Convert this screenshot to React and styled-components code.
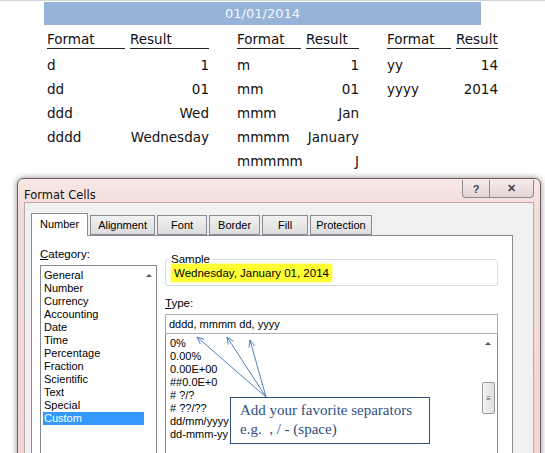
import React from 'react';
import styled, { createGlobalStyle } from 'styled-components';

const Global = createGlobalStyle`
  html, body { margin: 0; padding: 0; background: #fff; }
  body { width: 545px; height: 453px; overflow: hidden; font-family: "DejaVu Sans", sans-serif; }
`;

const Page = styled.div`
  position: relative;
  width: 545px;
  height: 453px;
  overflow: hidden;
`;

const GridTop = styled.div`
  height: 1px;
  background: #d4d4d4;
`;

const Sheet = styled.div`
  margin-left: 44px;
  width: 437px;
`;

const Banner = styled.div`
  height: 23px;
  margin-top: 1px;
  background: #95b3d7;
  color: #f4f7fb;
  font-size: 13px;
  text-align: center;
  line-height: 24px;
`;

const Columns = styled.div`
  display: grid;
  grid-template-columns: 78px 79px 18px 64px 53px 18px 64px 42px;
  column-gap: 5px;
  font-size: 13.5px;
  color: #111;
  margin-left: -10px;
  padding-left: 13px;
`;

const Head = styled.div`
  height: 18px;
  margin-top: 5px;
  border-bottom: 1px solid #222;
  line-height: 18px;
  text-align: left;
`;

const Cell = styled.div`
  height: 24px;
  line-height: 24px;
  text-align: ${p => (p.right ? 'right' : 'left')};
  white-space: nowrap;
  ${p => p.first && 'margin-top: 4px;'}
`;

const Dialog = styled.div`
  position: absolute;
  left: 17px;
  top: 178px;
  width: 522px;
  height: 290px;
  border: 1px solid #6a5f5c;
  border-radius: 6px 6px 0 0;
  background: linear-gradient(#f7e8e6, #f3dcd8 30px, #f1d6d2);
  box-shadow: 0 0 6px rgba(0,0,0,0.45);
  font-family: "Liberation Sans", Tahoma, sans-serif;
  font-size: 11px;
  color: #000;
  display: flex;
  flex-direction: column;
`;

const TitleBar = styled.div`
  display: flex;
  align-items: flex-start;
  height: 28px;
  padding-left: 6px;
`;

const Title = styled.div`
  flex: 1;
  font-family: "DejaVu Sans", sans-serif;
  font-size: 11.5px;
  padding-top: 9px;
  color: #111;
`;

const Caps = styled.div`
  display: flex;
  margin-right: 6px;
  margin-top: 1px;
  border: 1px solid #8c8a8a;
  border-top: none;
  border-radius: 0 0 4px 4px;
  background: linear-gradient(#f6eeee, #e3d3d3);
  height: 17px;
`;

const Cap = styled.div`
  width: ${p => p.w}px;
  display: flex;
  align-items: center;
  justify-content: center;
  color: #444;
  font-weight: bold;
  font-size: 11px;
  border-left: ${p => (p.sep ? '1px solid #8c8a8a' : 'none')};
`;

const Body = styled.div`
  flex: 1;
  margin: 0 6px;
  border: 1px solid #b7aaa8;
  border-bottom: none;
  background: #f0f0f0;
  padding: 10px 0 0 6px;
`;

const Tabs = styled.div`
  display: flex;
  align-items: flex-end;
  height: 22px;
  gap: 2px;
`;

const Tab = styled.div`
  height: ${p => (p.active ? 22 : 18)}px;
  padding: 0 ${p => p.pad}px;
  border: 1px solid #898c95;
  border-bottom: ${p => (p.active ? 'none' : '1px solid #898c95')};
  background: ${p => (p.active ? '#fff' : 'linear-gradient(#f2f2f2, #dcdcdc)')};
  line-height: ${p => (p.active ? 20 : 18)}px;
  font-size: 11px;
  position: relative;
  z-index: ${p => (p.active ? 2 : 1)};
  margin-bottom: ${p => (p.active ? -1 : 0)}px;
`;

const Panel = styled.div`
  width: 472px;
  height: 230px;
  background: #fff;
  border: 1px solid #898c95;
  display: flex;
  padding: 12px 0 0 8px;
  gap: 8px;
`;

const CatCol = styled.div`
  width: 117px;
`;

const Label = styled.div`
  height: 13px;
  margin-bottom: 4px;
  font-size: 11.5px;
  u { text-decoration: underline; }
`;

const ListBox = styled.div`
  position: relative;
  border: 1px solid #828790;
  height: 200px;
  padding: 3px 0 0 2px;
`;

const Item = styled.div`
  height: 13px;
  line-height: 13px;
  padding-left: 1px;
  width: ${p => (p.sel ? '100px' : 'auto')};
  background: ${p => (p.sel ? '#3399ff' : 'transparent')};
  color: ${p => (p.sel ? '#fff' : '#000')};
`;

const ScrollArrow = styled.div`
  position: absolute;
  right: ${p => p.r}px;
  top: ${p => p.t}px;
  width: 0;
  height: 0;
  border-left: 3px solid transparent;
  border-right: 3px solid transparent;
  border-bottom: 3px solid #5a5a5a;
`;

const RightCol = styled.div`
  width: 333px;
  display: flex;
  flex-direction: column;
  padding-top: 5px;
`;

const Group = styled.fieldset`
  margin: 0;
  padding: 2px 0 4px 5px;
  border: 1px solid #d5dfe5;
  border-radius: 3px;
  height: 27px;
  box-sizing: border-box;
  height: 33px;
  legend { padding: 0 2px; margin-left: -2px; font-size: 11.5px; }
`;

const Highlight = styled.span`
  background: #ffff33;
  padding: 3px 3px;
  font-size: 11.5px;
  box-shadow: 0 0 2px #ffff33;
`;

const TypeLabel = styled.div`
  margin-top: 11px;
  height: 13px;
  margin-bottom: 4px;
  font-size: 11.5px;
`;

const Input = styled.div`
  border: 1px solid #abadb3;
  height: 18px;
  line-height: 18px;
  padding-left: 3px;
`;

const TypeList = styled.div`
  position: relative;
  flex: 1;
  border: 1px solid #828790;
  border-top: none;
  padding: 3px 0 0 3px;
`;

const Thumb = styled.div`
  position: absolute;
  right: 2px;
  top: 48px;
  width: 11px;
  height: 30px;
  border: 1px solid #9a9a9a;
  border-radius: 2px;
  background: linear-gradient(90deg, #f3f3f3, #dedede);
  display: flex;
  align-items: center;
  justify-content: center;
  font-size: 8px;
  color: #555;
`;

const Callout = styled.div`
  position: absolute;
  left: 230px;
  top: 397px;
  width: 200px;
  height: 47px;
  border: 1px solid #2f4f7f;
  background: #fff;
  font-family: "Liberation Serif", serif;
  font-size: 15px;
  color: #2f4f7f;
  padding: 3px 0 0 9px;
  box-sizing: border-box;
  line-height: 19px;
  z-index: 5;
`;

const Arrows = styled.svg`
  position: absolute;
  left: 0;
  top: 0;
  z-index: 4;
  pointer-events: none;
`;

const rows = [
  ['d', '1', 'm', '1', 'yy', '14'],
  ['dd', '01', 'mm', '01', 'yyyy', '2014'],
  ['ddd', 'Wed', 'mmm', 'Jan', '', ''],
  ['dddd', 'Wednesday', 'mmmm', 'January', '', ''],
  ['', '', 'mmmmm', 'J', '', ''],
];

const cats = ['General', 'Number', 'Currency', 'Accounting', 'Date', 'Time', 'Percentage', 'Fraction', 'Scientific', 'Text', 'Special', 'Custom'];
const types = ['0%', '0.00%', '0.00E+00', '##0.0E+0', '# ?/?', '# ??/??', 'dd/mm/yyyy', 'dd-mmm-yy'];

// arrow tips, all starting from the callout corner
const tips = [[197, 337], [227, 337], [250, 340]];
const origin = [266, 397];

function head([x, y]) {
  const dx = origin[0] - x;
  const dy = origin[1] - y;
  const len = Math.hypot(dx, dy);
  const ux = dx / len;
  const uy = dy / len;
  const px = -uy;
  const py = ux;
  const a = [x + ux * 7 + px * 3, y + uy * 7 + py * 3];
  const b = [x + ux * 7 - px * 3, y + uy * 7 - py * 3];
  return `M${a[0]},${a[1]} L${x},${y} L${b[0]},${b[1]}`;
}

export default function App() {
  return (
    <Page>
      <Global />
      <GridTop />
      <Sheet>
        <Banner>01/01/2014</Banner>
        <Columns>
          {[0, 1, 2].map(g => (
            <React.Fragment key={g}>
              <Head>Format</Head>
              <Head>Result</Head>
              {g < 2 && <div />}
            </React.Fragment>
          ))}
          {rows.map((r, i) => (
            <React.Fragment key={i}>
              <Cell first={i === 0}>{r[0]}</Cell>
              <Cell first={i === 0} right>{r[1]}</Cell>
              <div />
              <Cell first={i === 0}>{r[2]}</Cell>
              <Cell first={i === 0} right>{r[3]}</Cell>
              <div />
              <Cell first={i === 0}>{r[4]}</Cell>
              <Cell first={i === 0} right>{r[5]}</Cell>
            </React.Fragment>
          ))}
        </Columns>
      </Sheet>

      <Dialog>
        <TitleBar>
          <Title>Format Cells</Title>
          <Caps>
            <Cap w={26}>?</Cap>
            <Cap w={43} sep>✕</Cap>
          </Caps>
        </TitleBar>
        <Body>
          <Tabs>
            <Tab active pad={8}>Number</Tab>
            <Tab pad={7}>Alignment</Tab>
            <Tab pad={13}>Font</Tab>
            <Tab pad={8}>Border</Tab>
            <Tab pad={15}>Fill</Tab>
            <Tab pad={5}>Protection</Tab>
          </Tabs>
          <Panel>
            <CatCol>
              <Label><u>C</u>ategory:</Label>
              <ListBox>
                {cats.map(c => <Item key={c} sel={c === 'Custom'}>{c}</Item>)}
                <ScrollArrow r={4} t={8} />
              </ListBox>
            </CatCol>
            <RightCol>
              <Group>
                <legend>Sample</legend>
                <Highlight>Wednesday, January 01, 2014</Highlight>
              </Group>
              <TypeLabel><u>T</u>ype:</TypeLabel>
              <Input>dddd, mmmm dd, yyyy</Input>
              <TypeList>
                {types.map(t => <Item key={t}>{t}</Item>)}
                <ScrollArrow r={6} t={8} />
                <Thumb>≡</Thumb>
              </TypeList>
            </RightCol>
          </Panel>
        </Body>
      </Dialog>

      <Arrows width="545" height="453">
        {tips.map((t, i) => (
          <g key={i} stroke="#4f81bd" strokeWidth="1" fill="none">
            <line x1={origin[0]} y1={origin[1]} x2={t[0]} y2={t[1]} />
            <path d={head(t)} />
          </g>
        ))}
      </Arrows>
      <Callout>
        Add your favorite separators<br />e.g. &nbsp;, / - (space)
      </Callout>
    </Page>
  );
}
